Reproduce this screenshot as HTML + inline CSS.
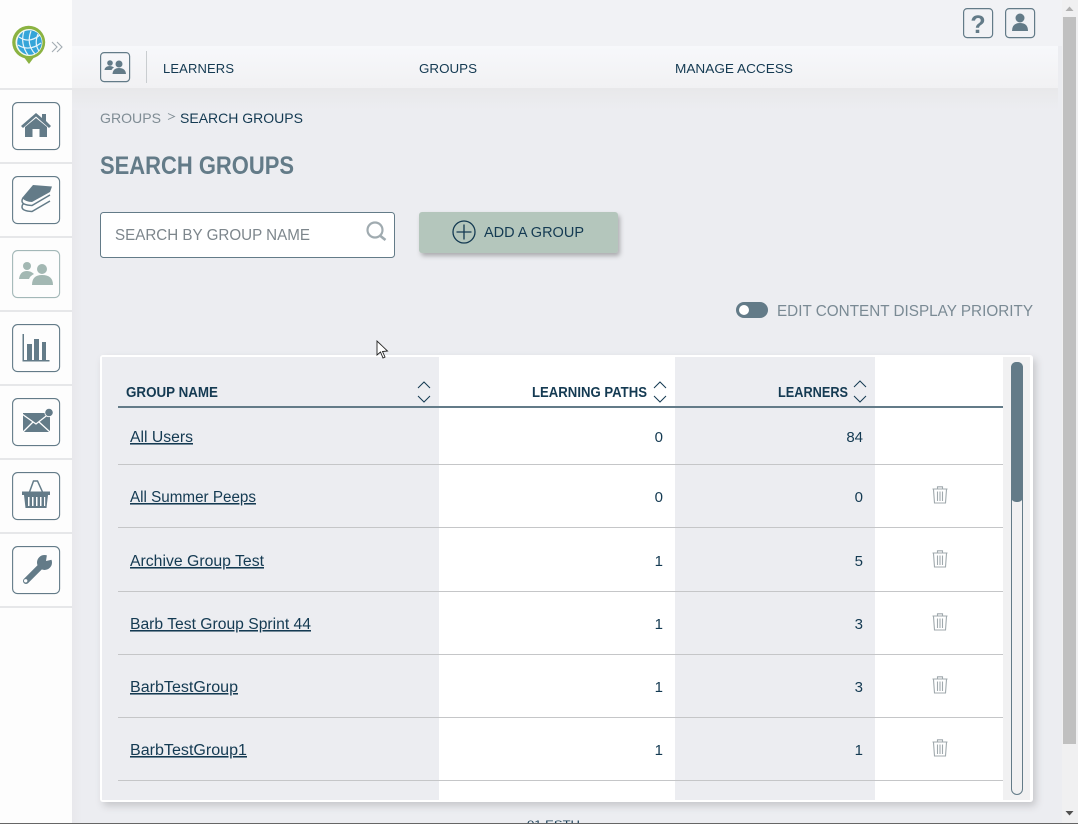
<!DOCTYPE html>
<html lang="en"><head><meta charset="utf-8"><title>Search Groups</title>
<style>
html,body{margin:0;padding:0;width:1078px;height:824px;overflow:hidden;background:#ecedf1}
svg{display:block;position:absolute;left:0;top:0}
text{font-family:"Liberation Sans",sans-serif}
.n{fill:#143a52}.b{font-weight:700}
</style></head><body>
<svg width="1078" height="824" viewBox="0 0 1078 824" xmlns="http://www.w3.org/2000/svg">
<defs>
<linearGradient id="hd" x1="0" y1="0" x2="0" y2="1"><stop offset="0" stop-color="#f7f8fb"/><stop offset="1" stop-color="#f1f1f3"/></linearGradient>
<linearGradient id="hs" x1="0" y1="0" x2="0" y2="1"><stop offset="0" stop-color="#e8e8ea"/><stop offset="1" stop-color="#ecedf1"/></linearGradient>
<linearGradient id="ss" x1="0" y1="0" x2="1" y2="0"><stop offset="0" stop-color="#e8e8ec"/><stop offset="1" stop-color="#ecedf1"/></linearGradient>
<filter id="sh" x="-5%" y="-5%" width="110%" height="110%"><feDropShadow dx="3" dy="4" stdDeviation="4" flood-color="#000" flood-opacity=".16"/></filter>
<filter id="bs" x="-10%" y="-20%" width="120%" height="150%"><feDropShadow dx="2" dy="3" stdDeviation="2.5" flood-color="#000" flood-opacity=".28"/></filter>
</defs>
<rect width="1078" height="824" fill="#ecedf1"/>
<rect x="72" y="0" width="990" height="46" fill="#f1f2f5"/>
<rect x="72" y="88" width="10" height="736" fill="url(#ss)"/>
<rect x="72" y="46" width="986" height="42" fill="url(#hd)"/>
<rect x="72" y="88" width="986" height="22" fill="url(#hs)"/>

<!-- sidebar -->
<rect x="0" y="0" width="72" height="824" fill="#fdfdfd"/>
<g fill="#e6e7e9">
<rect y="88" width="72" height="2"/><rect y="162" width="72" height="2"/><rect y="236" width="72" height="2"/><rect y="310" width="72" height="2"/><rect y="384" width="72" height="2"/><rect y="458" width="72" height="2"/><rect y="532" width="72" height="2"/><rect y="606" width="72" height="2"/>
</g>
<!-- logo -->
<circle cx="28.700" cy="42.300" r="16.500" fill="#8bb342"/>
<path d="M23 56 L35 56 L29 64Z" fill="#8bb342"/>
<circle cx="29" cy="42.500" r="13.500" fill="#f4f8ef"/>
<circle cx="29.500" cy="42.500" r="12.300" fill="#35a5d9"/>
<g stroke="#e8f5fb" stroke-width="1.200" fill="none"><path d="M19 37 Q29 44 40 35"/><path d="M18 45 Q29 52 41 43"/><path d="M24 31 Q20 44 28 55"/><path d="M31 31 Q26 44 35 54"/><path d="M38 34 Q34 44 39 51"/></g>
<path d="M52 42 L57 47 L52 52 M57 42 L62 47 L57 52" fill="none" stroke="#a3acb2" stroke-width="1.100"/>

<g fill="none" stroke="#637b88" stroke-width="1.100">
<rect x="12.600" y="102.600" width="47" height="47" rx="5"/>
<rect x="12.600" y="176.600" width="47" height="47" rx="5"/>
<rect x="12.600" y="250.600" width="47" height="47" rx="5" stroke="#a3b8b8"/>
<rect x="12.600" y="324.600" width="47" height="47" rx="5"/>
<rect x="12.600" y="398.600" width="47" height="47" rx="5"/>
<rect x="12.600" y="472.600" width="47" height="47" rx="5"/>
<rect x="12.600" y="546.600" width="47" height="47" rx="5"/>
</g>
<!-- home -->
<path d="M21 126 L36 113 L42 118 L42 114 L46 114 L46 121 L51 126 L49 128 L36 116.500 L23 128Z" fill="#637b88"/>
<path d="M25 127 L36 118 L47 127 L47 137 L39.500 137 L39.500 129 L32.500 129 L32.500 137 L25 137Z" fill="#637b88"/>
<!-- books -->
<path d="M33 185 L52 186.500 L50 192 L32 202 Q26 202 22 198Z" fill="#637b88"/>
<path d="M50 195 L32 205.500 Q22 205 22 201 Q22 198.500 24 197.500 M50 201 L32 211.500 Q22 211 22 207 Q22 204.500 24 203.500" fill="none" stroke="#637b88" stroke-width="1.500"/>
<!-- people -->
<g fill="#a3b8b3"><circle cx="27" cy="266" r="4"/><path d="M19 279 Q20 271 27 271 Q31 271 34 274 Q30 276 29 279Z"/><circle cx="42" cy="269" r="5"/><path d="M32 285 Q32 275 42 275 Q53 275 53 285Z"/></g>
<!-- chart -->
<g fill="#637b88"><rect x="22.500" y="334" width="1.500" height="27"/><rect x="22.500" y="360" width="27" height="1.500"/><rect x="27" y="344" width="5" height="16"/><rect x="34" y="339" width="5" height="21"/><rect x="42" y="342" width="4" height="18"/></g>
<!-- mail -->
<path d="M23 413 L50 413 L50 432 L23 432Z" fill="#637b88"/>
<path d="M22 414 L36 424 L50 413 M23 432 L33 422 M50 432 L39 422" fill="none" stroke="#fff" stroke-width="1.300"/>
<circle cx="49" cy="412.500" r="4.200" fill="#637b88" stroke="#fff" stroke-width=".8"/>
<!-- basket -->
<path d="M29.500 492 L33.500 481 L37.500 481 L42.500 492" fill="none" stroke="#637b88" stroke-width="1.500"/>
<rect x="22" y="491.500" width="28" height="3.500" fill="#637b88"/>
<path d="M24 495 L48 495 L46.500 508 L25.500 508Z" fill="#637b88"/>
<g fill="#fff"><rect x="28" y="497" width="1.500" height="9"/><rect x="32" y="497" width="1.500" height="9"/><rect x="36" y="497" width="1.500" height="9"/><rect x="40" y="497" width="1.500" height="9"/><rect x="44" y="497" width="1.200" height="9"/></g>
<!-- wrench -->
<path d="M26 581 L42 565" stroke="#637b88" stroke-width="6" stroke-linecap="round" fill="none"/>
<circle cx="44.500" cy="562.500" r="7.500" fill="#637b88"/>
<path d="M46 561 L47.500 551 L56 552 L55 559Z" fill="#fdfdfd"/>
<circle cx="25.700" cy="580.800" r="1.700" fill="#fff"/>

<!-- top right icons -->
<rect x="963.600" y="8.600" width="29" height="29" rx="3.500" fill="none" stroke="#637b88" stroke-width="1.200"/>
<rect x="1005.600" y="8.600" width="29" height="29" rx="3.500" fill="none" stroke="#637b88" stroke-width="1.200"/>
<text x="978" y="33" text-anchor="middle" font-size="25" class="b" fill="#637b88">?</text>
<circle cx="1020" cy="18" r="4.500" fill="#637b88"/><path d="M1012 31 Q1012 23 1020 23 Q1028 23 1028 31Z" fill="#637b88"/>

<!-- nav -->
<rect x="100.600" y="52.600" width="29" height="29" rx="3.500" fill="none" stroke="#637b88" stroke-width="1.200"/>
<g fill="#637b88"><circle cx="110" cy="63" r="2.800"/><path d="M104.500 70 Q105 66 110 66 Q112 66 114 67.500 Q112 68.500 111.500 70Z"/><circle cx="119" cy="64" r="3.500"/><path d="M112.500 74 Q113 68 119 68 Q125.500 68 126 74Z"/></g>
<rect x="146" y="51" width="1" height="32" fill="#c9cdd0"/>
<text x="163" y="73" font-size="13" textLength="71" lengthAdjust="spacing" class="n">LEARNERS</text>
<text x="419" y="73" font-size="13" textLength="58" lengthAdjust="spacingAndGlyphs" class="n">GROUPS</text>
<text x="675" y="73" font-size="13" textLength="118" lengthAdjust="spacingAndGlyphs" class="n">MANAGE ACCESS</text>

<!-- breadcrumb -->
<text x="100" y="123" font-size="14" textLength="61" lengthAdjust="spacingAndGlyphs" fill="#7f8c94">GROUPS</text>
<path d="M168 113.500 L174.500 116.500 L168 119.500" fill="none" stroke="#7f8c94" stroke-width=".9"/>
<text x="180" y="123" font-size="14" textLength="123" lengthAdjust="spacingAndGlyphs" class="n">SEARCH GROUPS</text>
<text x="100" y="174" font-size="25" class="b" fill="#637b88" textLength="194" lengthAdjust="spacingAndGlyphs">SEARCH GROUPS</text>

<!-- search -->
<rect x="100.500" y="212.500" width="294" height="45" rx="3" fill="#fff" stroke="#637b88"/>
<text x="115" y="240" font-size="15.500" textLength="195" lengthAdjust="spacingAndGlyphs" fill="#7d868c">SEARCH BY GROUP NAME</text>
<circle cx="375" cy="230" r="7.500" fill="none" stroke="#a0abb0" stroke-width="2.200"/>
<path d="M380.500 236 L385.500 240" stroke="#a0abb0" stroke-width="2.600" fill="none"/>

<!-- add group -->
<rect x="419" y="212" width="199" height="41" rx="3" fill="#b4c6bc" filter="url(#bs)"/>
<circle cx="464" cy="232" r="11" fill="none" stroke="#143a52" stroke-width="1.300"/>
<path d="M456.500 232 H471.500 M464 224.500 V239.500" stroke="#143a52" stroke-width="1.300"/>
<text x="484" y="237" font-size="14.500" textLength="100" lengthAdjust="spacingAndGlyphs" class="n">ADD A GROUP</text>

<!-- toggle -->
<rect x="736" y="302" width="32" height="16" rx="8" fill="#637b88"/>
<circle cx="744" cy="310" r="5" fill="#fff"/>
<text x="777" y="316" font-size="16" textLength="256" lengthAdjust="spacingAndGlyphs" fill="#7a8a94">EDIT CONTENT DISPLAY PRIORITY</text>

<!-- card -->
<rect x="100" y="355" width="933" height="447" rx="3" fill="#fff" filter="url(#sh)"/>
<rect x="102" y="357" width="337" height="443" fill="#ecedf1"/>
<rect x="675" y="357" width="200" height="443" fill="#ecedf1"/>
<rect x="1003" y="357" width="27" height="443" fill="#f1f1f2"/>
<rect x="118" y="406" width="885" height="2" fill="#637b88"/>
<g fill="#c5c6c8"><rect x="118" y="464" width="885" height="1"/><rect x="118" y="527" width="885" height="1"/><rect x="118" y="591" width="885" height="1"/><rect x="118" y="654" width="885" height="1"/><rect x="118" y="717" width="885" height="1"/><rect x="118" y="780" width="885" height="1"/></g>

<text x="126" y="397" font-size="14.500" class="b n" textLength="92" lengthAdjust="spacingAndGlyphs">GROUP NAME</text>
<text x="532" y="397" font-size="14.500" class="b n" textLength="115" lengthAdjust="spacingAndGlyphs">LEARNING PATHS</text>
<text x="778" y="397" font-size="14.500" class="b n" textLength="70" lengthAdjust="spacingAndGlyphs">LEARNERS</text>
<g fill="none" stroke="#143a52" stroke-width="1"><path d="M418 388 L424 382 L430 388 M418 396 L424 402 L430 396"/><path d="M654 388 L660 382 L666 388 M654 396 L660 402 L666 396"/><path d="M854 387 L860 381 L866 387 M854 396 L860 402 L866 396"/></g>

<g font-size="15.500" class="n" text-decoration="underline">
<text x="130" y="442" textLength="63" lengthAdjust="spacingAndGlyphs">All Users</text>
<text x="130" y="502" textLength="126" lengthAdjust="spacingAndGlyphs">All Summer Peeps</text>
<text x="130" y="566" textLength="134" lengthAdjust="spacingAndGlyphs">Archive Group Test</text>
<text x="130" y="629" textLength="181" lengthAdjust="spacingAndGlyphs">Barb Test Group Sprint 44</text>
<text x="130" y="692" textLength="108" lengthAdjust="spacingAndGlyphs">BarbTestGroup</text>
<text x="130" y="755" textLength="117" lengthAdjust="spacingAndGlyphs">BarbTestGroup1</text>
</g>
<g font-size="15" class="n" text-anchor="end">
<text x="663" y="442">0</text><text x="863" y="442">84</text>
<text x="663" y="502">0</text><text x="863" y="502">0</text>
<text x="663" y="566">1</text><text x="863" y="566">5</text>
<text x="663" y="629">1</text><text x="863" y="629">3</text>
<text x="663" y="692">1</text><text x="863" y="692">3</text>
<text x="663" y="755">1</text><text x="863" y="755">1</text>
</g>
<!-- trash icons -->
<g fill="none" stroke="#a0a9ad" stroke-width="1.100">
<path d="M932.500 489 H947.500 M937.500 489 V486.800 H942.500 V489 M933.500 489.500 L934.500 503 H945.500 L946.500 489.500 M937.500 491.500 V501 M940 491.500 V501 M942.500 491.500 V501"/>
<path transform="translate(0,64)" d="M932.500 489 H947.500 M937.500 489 V486.800 H942.500 V489 M933.500 489.500 L934.500 503 H945.500 L946.500 489.500 M937.500 491.500 V501 M940 491.500 V501 M942.500 491.500 V501"/>
<path transform="translate(0,127)" d="M932.500 489 H947.500 M937.500 489 V486.800 H942.500 V489 M933.500 489.500 L934.500 503 H945.500 L946.500 489.500 M937.500 491.500 V501 M940 491.500 V501 M942.500 491.500 V501"/>
<path transform="translate(0,190)" d="M932.500 489 H947.500 M937.500 489 V486.800 H942.500 V489 M933.500 489.500 L934.500 503 H945.500 L946.500 489.500 M937.500 491.500 V501 M940 491.500 V501 M942.500 491.500 V501"/>
<path transform="translate(0,253)" d="M932.500 489 H947.500 M937.500 489 V486.800 H942.500 V489 M933.500 489.500 L934.500 503 H945.500 L946.500 489.500 M937.500 491.500 V501 M940 491.500 V501 M942.500 491.500 V501"/>
</g>
<!-- inner scrollbar -->
<rect x="1011.500" y="362.500" width="11" height="432" rx="5.500" fill="none" stroke="#637b88"/>
<rect x="1011" y="362" width="12" height="140" rx="5" fill="#637b88"/>

<!-- bottom sliver text -->
<text x="527" y="827" font-size="9.500" class="n" textLength="53" lengthAdjust="spacingAndGlyphs">01 ESTH</text>

<!-- cursor -->
<path d="M377 341 L377 355 L380.500 352 L383 358 L385 357 L382.500 351.500 L387.500 351Z" fill="#fff" stroke="#222" stroke-width=".9"/>

<!-- page scrollbar -->
<rect x="1062" y="0" width="16" height="824" fill="#f0f0f1"/>
<rect x="1063" y="17" width="13" height="727" fill="#c0c0c0"/>
<path d="M1069.500 6.500 L1073.500 11 H1065.500Z" fill="#b0b0b0"/>
<path d="M1065.500 811 H1073.500 L1069.500 815.500Z" fill="#505050"/>
<rect x="0" y="823" width="1078" height="1" fill="#666"/>
</svg>
</body></html>
